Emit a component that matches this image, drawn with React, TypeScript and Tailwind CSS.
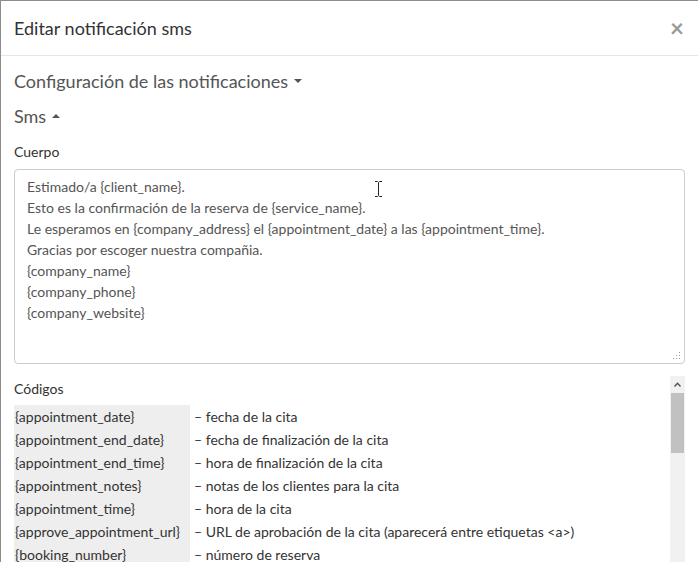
import React from "react";

const codes: [string, string][] = [
  ["{appointment_date}", "– fecha de la cita"],
  ["{appointment_end_date}", "– fecha de finalización de la cita"],
  ["{appointment_end_time}", "– hora de finalización de la cita"],
  ["{appointment_notes}", "– notas de los clientes para la cita"],
  ["{appointment_time}", "– hora de la cita"],
  ["{approve_appointment_url}", "– URL de aprobación de la cita (aparecerá entre etiquetas <a>)"],
  ["{booking_number}", "– número de reserva"],
];

const body = [
  "Estimado/a {client_name}.",
  "Esto es la confirmación de la reserva de {service_name}.",
  "Le esperamos en {company_address} el {appointment_date} a las {appointment_time}.",
  "Gracias por escoger nuestra compañia.",
  "{company_name}",
  "{company_phone}",
  "{company_website}",
];

const App = () => {
  return (
    <div className="relative w-[698px] h-[562px] overflow-hidden bg-white border-l border-t border-[#8c8c8c] font-['Lato',sans-serif] text-[#333]">
      {/* header */}
      <div className="flex items-center justify-between h-[55px] pl-[13px] pr-[14px] border-b border-[#e5e5e5]">
        <h4 className="text-[18px] leading-none">Editar notificación sms</h4>
        <span className="text-[24px] leading-none text-[#999] font-bold">×</span>
      </div>

      <div className="pl-[13px] pr-[13px]">
        <div className="flex items-center gap-[6px] h-[50px] text-[18px] text-[#555]">
          Configuración de las notificaciones
          <span className="w-0 h-0 border-x-[4px] border-x-transparent border-t-[4px] border-t-[#555]" />
        </div>
        <div className="flex items-center gap-[6px] mt-[3px] h-[14px] text-[18px] text-[#555]">
          Sms
          <span className="w-0 h-0 border-x-[4px] border-x-transparent border-b-[4px] border-b-[#555]" />
        </div>

        <div className="mt-[22px] text-[14px] leading-none">Cuerpo</div>
        <div className="relative mt-[10px] h-[195px] border border-[#ccc] rounded-[4px] px-[12px] pt-[6px] text-[14px] leading-[21px] text-[#555]">
          {body.map((l) => (
            <div key={l}>{l}</div>
          ))}
          <svg className="absolute right-[3px] bottom-[3px]" width="8" height="8" viewBox="0 0 8 8">
            <g fill="#9a9a9a">
              <rect x="6" y="0" width="1" height="1" />
              <rect x="3" y="3" width="1" height="1" />
              <rect x="6" y="3" width="1" height="1" />
              <rect x="0" y="6" width="1" height="1" />
              <rect x="3" y="6" width="1" height="1" />
              <rect x="6" y="6" width="1" height="1" />
            </g>
          </svg>
        </div>

        <div className="flex mt-[12px] h-[200px]">
          <div className="flex-1 min-w-0">
            <div className="pt-[6px] text-[14px] leading-none">Códigos</div>
            <div className="mt-[9px] text-[14px]">
              {codes.map(([c, d]) => (
                <div key={c} className="flex h-[23px] items-center">
                  <div className="w-[176px] h-full flex items-center bg-[#eee] pl-[1px]">{c}</div>
                  <div className="pl-[4px] whitespace-nowrap">{d}</div>
                </div>
              ))}
            </div>
          </div>
          <div className="w-[15px] bg-[#f1f1f1] flex flex-col">
            <div className="h-[17px] flex items-center justify-center">
              <svg width="7" height="5" viewBox="0 0 7 5">
                <path d="M0.5 4.5 L3.5 1.2 L6.5 4.5" fill="none" stroke="#505050" strokeWidth="1.4" />
              </svg>
            </div>
            <div className="mx-[1px] h-[60px] bg-[#c1c1c1]" />
          </div>
        </div>
      </div>

      {/* mouse cursor */}
      <svg className="absolute left-[373px] top-[180px]" width="9" height="16" viewBox="0 0 9 16">
        <path d="M1 0.5 H3.5 L4.5 1.5 L5.5 0.5 H8 M4.5 1.5 V14.5 M1 15.5 H3.5 L4.5 14.5 L5.5 15.5 H8" fill="none" stroke="#222" strokeWidth="1" />
      </svg>
    </div>
  );
};

export default App;
